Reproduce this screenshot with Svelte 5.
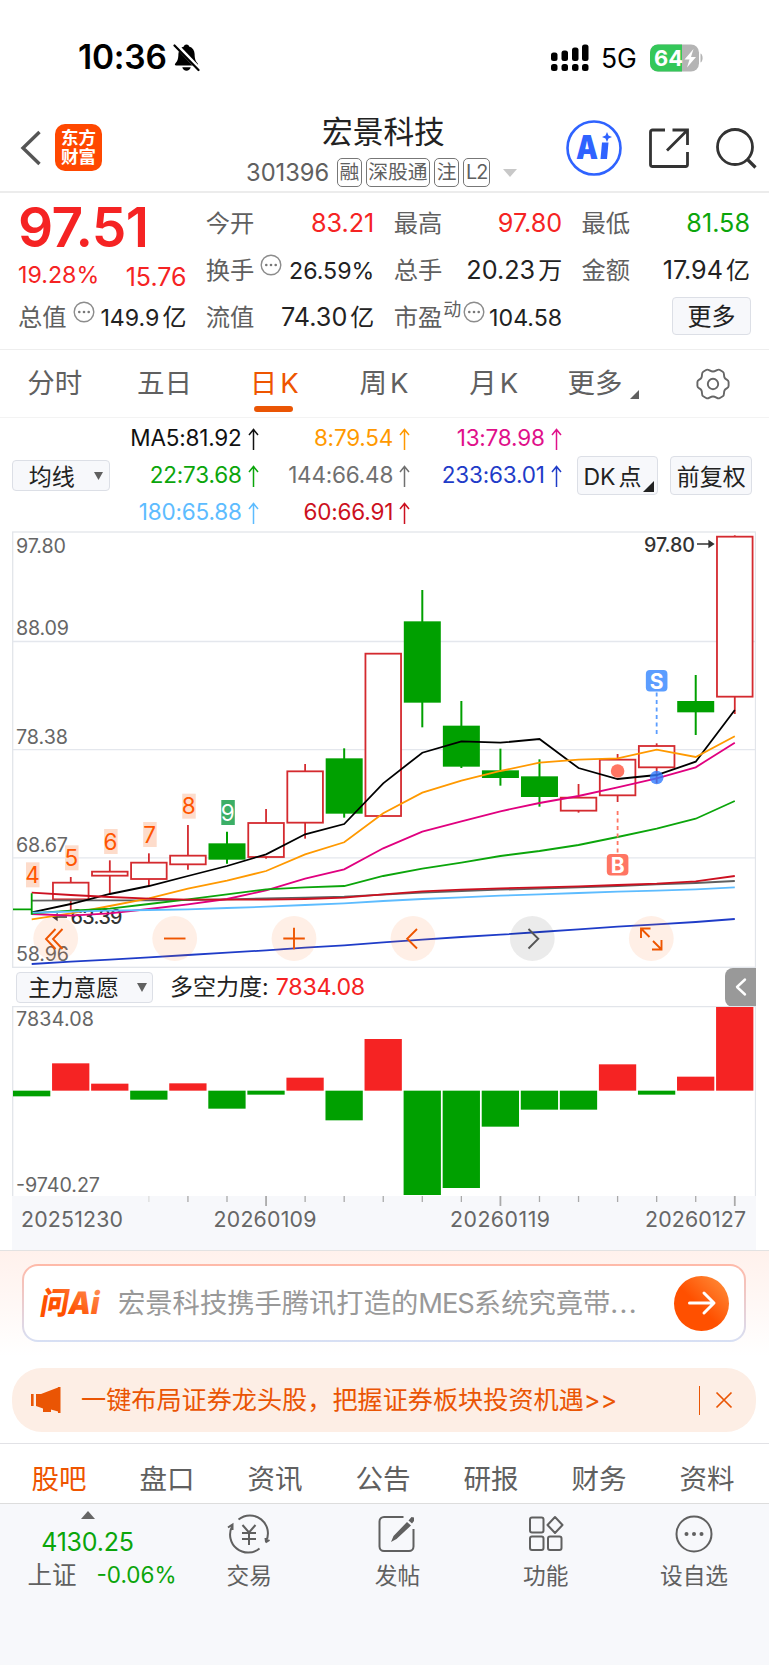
<script lang="ts">
  interface Candle {
    up: boolean
    high: number
    top: number
    bottom: number
    low: number
  }

  // chart samples are kept in @3x device pixels
  const STEP = 39.06
  const cx = (i: number) => 19.7 + STEP * i
  const py = (v: number) => v / 3 - 11
  const vy = (v: number) => v / 3 - 46

  const c = (up: number, high: number, top: number, bottom: number, low: number): Candle =>
    ({ up: up === 1, high, top, bottom, low })

  const candles: Candle[] = [
    c(0, 1120, 1167, 1169, 1184),
    c(1, 1071, 1088, 1138, 1170),
    c(1, 1021, 1055, 1067, 1120),
    c(1, 1000, 1028, 1077, 1097),
    c(1, 915, 1007, 1033, 1049),
    c(0, 935, 970, 1019, 1031),
    c(1, 867, 909, 1011, 1016),
    c(1, 732, 754, 908, 956),
    c(0, 685, 715, 881, 893),
    c(1, 401, 401, 888, 888),
    c(0, 210, 304, 548, 622),
    c(0, 543, 617, 740, 744),
    c(0, 686, 751, 774, 797),
    c(0, 718, 769, 831, 860),
    c(1, 792, 833, 872, 878),
    c(1, 702, 719, 826, 846),
    c(1, 670, 678, 742, 790),
    c(0, 465, 543, 577, 645),
    c(1, 46, 50, 530, 582),
  ]

  const lines = [
    { color: '#1f3cc8', pts: [1332, 1325, 1319, 1312, 1305, 1298, 1291, 1283, 1276, 1267, 1259, 1251, 1244, 1236, 1228, 1220, 1213, 1206, 1197] },
    { color: '#606060', pts: [1142, 1141, 1141, 1141, 1140, 1138, 1135, 1133, 1130, 1124, 1118, 1113, 1109, 1106, 1102, 1098, 1093, 1089, 1083] },
    { color: '#000000', pts: [1177, 1152, 1122, 1098, 1068, 1038, 1003, 943, 912, 790, 698, 664, 668, 657, 744, 777, 765, 725, 570] },
    { color: '#ff9900', pts: [1198, 1180, 1158, 1135, 1106, 1082, 1053, 1003, 967, 880, 818, 782, 753, 728, 719, 715, 689, 711, 649] },
    { color: '#e0007f', pts: [1182, 1187, 1180, 1167, 1153, 1137, 1111, 1076, 1048, 985, 935, 904, 874, 849, 828, 802, 775, 742, 668] },
    { color: '#0ba50b', pts: [1180, 1172, 1166, 1152, 1138, 1123, 1108, 1102, 1098, 1068, 1046, 1028, 1008, 993, 975, 951, 926, 896, 843] },
    { color: '#5dbcff', pts: [1178, 1175, 1172, 1170, 1168, 1164, 1160, 1155, 1150, 1143, 1137, 1132, 1127, 1123, 1119, 1115, 1112, 1108, 1102] },
    { color: '#cc1020', pts: [1118, 1125, 1131, 1136, 1139, 1139, 1139, 1137, 1133, 1123, 1114, 1109, 1105, 1102, 1099, 1095, 1091, 1084, 1068] },
  ]

  const counts = [
    { n: 4, y: 1027 }, { n: 5, y: 976 }, { n: 6, y: 927 },
    { n: 7, y: 906 }, { n: 8, y: 821 }, { n: 9, y: 840 },
  ]

  const ZERO = 392
  const force = [409, 310, 371, 419, 370, 446, 404, 353, 481, 237, 705, 684, 500, 449, 449, 313, 404, 350, 141]

  const path = (pts: number[]) => pts.map((p, i) => `${cx(i).toFixed(1)},${py(p).toFixed(1)}`).join(' ')

  const priceLabels = [
    { t: '97.80', y: 22, w: 50 },
    { t: '88.09', y: 104, w: 53 },
    { t: '78.38', y: 212.5, w: 52 },
    { t: '68.67', y: 321, w: 52 },
    { t: '58.96', y: 430, w: 53 },
  ]

  const dates = [
    { t: '20251230', x: 9, w: 102 },
    { t: '20260109', x: 201.5, w: 103 },
    { t: '20260119', x: 438, w: 100 },
    { t: '20260127', x: 633, w: 101 },
  ]

  const averages = [
    { t: 'MA5:81.92', color: '#111' },
    { t: '8:79.54', color: '#ff9900' },
    { t: '13:78.98', color: '#e0108a' },
    { t: '22:73.68', color: '#0ba50b' },
    { t: '144:66.48', color: '#707070' },
    { t: '233:63.01', color: '#1f3cc8' },
    { t: '180:65.88', color: '#5dbcff' },
    { t: '60:66.91', color: '#cc1020' },
  ]

  const sections = ['股吧', '盘口', '资讯', '公告', '研报', '财务', '资料']
</script>

{#snippet info()}
  <svg class="info" width="22" height="22" viewBox="0 0 22 22">
    <circle cx="11" cy="11" r="9.8" fill="none" stroke="#8c8c8c" stroke-width="1.4" />
    <g fill="#777"><circle cx="6.3" cy="11" r="1.3" /><circle cx="11" cy="11" r="1.3" /><circle cx="15.7" cy="11" r="1.3" /></g>
  </svg>
{/snippet}

<div class="page">
  <div class="status">
    <span class="time">10:36</span>
    <svg class="bell" width="27" height="29" viewBox="0 0 27 29">
      <path d="M13.5 1.5c1.5 0 2.4.9 2.6 2 3.5 1 5.4 4 5.5 7.6.1 5 .9 7.3 3.1 9.4.8.9.5 2-.8 2H3.1c-1.3 0-1.6-1.1-.8-2 2.2-2.1 3-4.4 3.1-9.4.1-3.6 2-6.6 5.5-7.6.2-1.1 1.1-2 2.6-2z" />
      <path d="M9.3 24.3h8.4c-.5 2-2.2 3.4-4.2 3.4s-3.7-1.4-4.2-3.4z" />
      <path d="M2.5 1.5l24 25" stroke="#fff" stroke-width="4.5" />
      <path d="M1.5 2.5l24 24.5" stroke="#000" stroke-width="2.2" stroke-linecap="round" />
    </svg>
    <svg class="signal" width="40" height="28" viewBox="0 0 40 28">
      <rect x="1" y="8.5" width="6.5" height="8.5" rx="2.5" />
      <rect x="11.5" y="6.5" width="6.5" height="10.5" rx="2.5" />
      <rect x="22" y="3.5" width="6.5" height="13.5" rx="2.5" />
      <rect x="32" y="0.5" width="6.5" height="16.5" rx="2.5" />
      <rect x="1" y="20" width="6.5" height="7" rx="2.5" />
      <rect x="11.5" y="20" width="6.5" height="7" rx="2.5" />
      <rect x="22" y="20" width="6.5" height="7" rx="2.5" />
      <rect x="32" y="20" width="6.5" height="7" rx="2.5" />
    </svg>
    <span class="net">5G</span>
    <svg class="battery" width="54" height="28" viewBox="0 0 54 28">
      <rect x="0" y="0.5" width="49" height="27" rx="8" fill="#b4b4b4" />
      <path d="M8 .5h24v27H8a8 8 0 0 1-8-8v-11a8 8 0 0 1 8-8z" fill="#34c759" />
      <path d="M50.5 9.5c2.8.9 2.8 8.1 0 9z" fill="#b4b4b4" />
      <text x="4" y="22" textLength="29" lengthAdjust="spacingAndGlyphs">64</text>
      <path d="M43.5 5l-9 10.500h5l-2.500 8 9-10.500H41z" fill="#fff" />
    </svg>
  </div>

  <header>
    <div class="left">
      <svg width="22" height="36" viewBox="0 0 22 36"><path d="M20.5 2L4 18l16.5 16" fill="none" stroke="#555" stroke-width="3.4" /></svg>
      <div class="logo"><span>东方</span><span>财富</span></div>
    </div>
    <div class="title">
      <h1>宏景科技</h1>
      <div class="sub">
        <span class="code">301396</span>
        <span class="tag">融</span><span class="tag">深股通</span><span class="tag">注</span><span class="tag l2">L2</span>
        <svg width="14" height="8" viewBox="0 0 14 8"><path d="M0 0h14L7 8z" fill="#c8c8c8" /></svg>
      </div>
    </div>
    <div class="tools">
      <svg width="58" height="58" viewBox="0 0 58 58">
        <circle cx="29" cy="29" r="26.5" fill="#fff" stroke="#2f63ff" stroke-width="2.6" />
        <text x="11" y="39.5" class="ai" textLength="22" lengthAdjust="spacingAndGlyphs">A</text>
        <path d="M37 23.5h6.5L42 40h-6.500z" fill="#2f63ff" />
        <path d="M42 13l1.500 3.500L47 18l-3.500 1.500L42 23l-1.500-3.500L37 18l3.500-1.500z" fill="#2f63ff" />
      </svg>
      <svg width="42" height="42" viewBox="0 0 42 42" fill="none" stroke="#333" stroke-width="2.800">
        <path d="M17 3H4.500a2 2 0 0 0-2 2v32.500a2 2 0 0 0 2 2h33a2 2 0 0 0 2-2V25" />
        <path d="M24.500 3h15v15M39 3.500L19 23.500" />
      </svg>
      <svg width="42" height="42" viewBox="0 0 42 42" fill="none" stroke="#333" stroke-width="2.800">
        <circle cx="20" cy="20" r="17.500" /><path d="M32 32l8.500 8.500" stroke-width="3.200" />
      </svg>
    </div>
  </header>

  <section class="quote">
    <div class="col">
      <div class="price">97.51</div>
      <div class="cell change"><span class="pct">19.28%</span><b>15.76</b></div>
      <div class="cell"><span>总值{@render info()}</span><b class="low">149.9<i>亿</i></b></div>
    </div>
    <div class="col">
      <div class="cell"><span>今开</span><b class="red">83.21</b></div>
      <div class="cell"><span>换手{@render info()}</span><b class="low">26.59%</b></div>
      <div class="cell"><span>流值</span><b>74.30<i>亿</i></b></div>
    </div>
    <div class="col">
      <div class="cell"><span>最高</span><b class="red">97.80</b></div>
      <div class="cell"><span>总手</span><b>20.23<i>万</i></b></div>
      <div class="cell"><span>市盈<sup>动</sup>{@render info()}</span><b class="low">104.58</b></div>
    </div>
    <div class="col">
      <div class="cell"><span>最低</span><b class="green">81.58</b></div>
      <div class="cell"><span>金额</span><b>17.94<i>亿</i></b></div>
      <div class="cell"><button class="box more">更多</button></div>
    </div>
  </section>

  <nav class="periods">
    <span>分时</span>
    <span>五日</span>
    <span class="active">日<em>K</em></span>
    <span>周<em>K</em></span>
    <span>月<em>K</em></span>
    <span class="drop">更多<svg width="9" height="9" viewBox="0 0 9 9"><path d="M9 0v9H0z" fill="#606060" /></svg></span>
    <span>
      <svg width="34" height="34" viewBox="0 0 34 34" fill="none" stroke="#666" stroke-width="1.9" stroke-linejoin="round">
        <path d="M10.500 2.800C12.500 1.800 14 4.500 17 4.500s4.500-2.700 6.500-1.700l3.300 1.900c2 1.300.6 3.800 1.800 6s4 1.900 4 4.300v4c0 2.400-2.800 2.100-4 4.300s.2 4.700-1.800 6l-3.300 1.900c-2 1-3.500-1.700-6.500-1.700s-4.500 2.700-6.500 1.700l-3.300-1.900c-2-1.300-.6-3.800-1.800-6s-4-1.900-4-4.300v-4c0-2.400 2.800-2.100 4-4.300s-.2-4.700 1.800-6z" />
        <circle cx="17" cy="17" r="5.2" />
      </svg>
    </span>
  </nav>

  <section class="ma">
    <button class="box ma-type"><span>均线</span><svg width="9" height="8" viewBox="0 0 9 8"><path d="M0 0h9L4.500 8z" fill="#606060" /></svg></button>
    <div class="averages">
      {#each averages as a}
        <span style="color: {a.color}">
          {a.t}<svg width="11" height="22" viewBox="0 0 11 22"><path d="M5.500 22V1.500M1 7l4.500-5.500L10 7" fill="none" stroke="currentColor" stroke-width="1.500" /></svg>
        </span>
      {/each}
    </div>
    <button class="box dk"><span>DK<i>点</i></span><svg width="11" height="11" viewBox="0 0 11 11"><path d="M11 0v11H0z" fill="#222" /></svg></button>
    <button class="box fq"><span>前复权</span></button>
  </section>

  <svg class="kline" width="744" height="437" viewBox="0 0 744 437">
    <rect x="0.7" y="1" width="742.8" height="435.3" fill="none" stroke="#e2e5ea" stroke-width="1.3" />
    {#each [110.5, 218.7, 326.8] as y}
      <path d="M1 {y}h742" stroke="#e4e7ed" stroke-width="1.3" />
    {/each}
    {#each priceLabels as l}
      <text class="axis" x="4" y={l.y} textLength={l.w}>{l.t}</text>
    {/each}

    <text class="mark" x="58.5" y="392.5" textLength="52">63.39</text>
    <path d="M41 386h14M41 386l4-3v6z" fill="#333" stroke="#333" stroke-width="1.3" />

    {#each candles as k, i}
      {#if k.up}
        <g fill="#fff" stroke="#d42a2f" stroke-width="1.8">
          <path d="M{cx(i)} {py(k.high)}V{py(k.low)}" />
          <rect x={cx(i) - 17.8} y={py(k.top)} width="35.6" height={(k.bottom - k.top) / 3} />
        </g>
      {:else if i > 0}
        <path d="M{cx(i)} {py(k.high)}V{py(k.low)}" stroke="#00a000" stroke-width="2" />
        <rect x={cx(i) - 18.5} y={py(k.top)} width="37" height={(k.bottom - k.top) / 3} fill="#00a000" />
      {/if}
    {/each}

    {#each lines as line}
      <polyline points={path(line.pts)} fill="none" stroke={line.color} stroke-width="1.8" />
    {/each}
    <path d="M{cx(0)} {py(1120)}V{py(1184)}M1 {py(1168)}H{cx(0)}" stroke="#00a000" stroke-width="1.8" />

    {#each counts as k, i}
      <rect x={cx(i) - 5.7} y={py(k.y)} width="13.5" height="25" fill={k.n === 9 ? '#3bae66' : '#fddccb'} />
      <text class="count" x={cx(i) + 0.7} y={py(k.y) + 20.5} fill={k.n === 9 ? '#fff' : '#ff5500'}>{k.n}</text>
    {/each}

    <text class="mark" x="632" y="20.5" textLength="51">97.80</text>
    <path d="M685 13h16M701.5 13l-4.5-3v6z" fill="#333" stroke="#333" stroke-width="1.3" />

    <path d="M{cx(16)} 161.5v43" stroke="#5b9dff" stroke-width="1.8" stroke-dasharray="4 3.5" />
    <rect x={cx(16) - 10.8} y="139" width="21.6" height="21.6" rx="4" fill="#5b9dff" />
    <text class="bs" x={cx(16)} y="157.5">S</text>
    <circle cx={cx(16)} cy="246.5" r="6.8" fill="#2f7bff" opacity="0.8" />

    <path d="M{cx(15)} 280v43" stroke="#ff7563" stroke-width="1.8" stroke-dasharray="4 3.5" />
    <rect x={cx(15) - 10.8} y="323" width="21.6" height="21.6" rx="4" fill="#ff7563" />
    <text class="bs" x={cx(15)} y="341.5">B</text>
    <circle cx={cx(15)} cy="240" r="6.8" fill="#ff7563" />

    <g fill="#ff6a1f" fill-opacity="0.11">
      <circle cx="43.7" cy="407.5" r="22.4" />
      <circle cx="162.7" cy="407.5" r="22.4" />
      <circle cx="282" cy="407.5" r="22.4" />
      <circle cx="401" cy="407.5" r="22.4" />
      <circle cx="520.3" cy="407.5" r="22.4" fill="#000" fill-opacity="0.08" />
      <circle cx="639.3" cy="407.5" r="22.4" />
    </g>
    <g fill="none" stroke="#ee5500" stroke-width="1.9">
      <path d="M43.5 398l-9.500 10 9.500 10M50.500 398l-9.500 10 9.500 10" />
      <path d="M152 407.500h21.500" />
      <path d="M271.300 407.500h21.500M282 396.800v21.500" />
      <path d="M405 398l-9.800 9.800L405 417.500" />
      <path d="M516.500 398l9.800 9.800-9.800 9.700" stroke="#555" />
      <path d="M629 407v-9.500h9.500M629.500 398l8 8M649.500 409v9.500H640M649 418l-8-8" />
    </g>
  </svg>

  <div class="indicator">
    <button class="box ind-type"><span>主力意愿</span><svg width="10" height="9" viewBox="0 0 9 8"><path d="M0 0h9L4.500 8z" fill="#606060" /></svg></button>
    <span class="name">多空力度:</span>
    <span class="val">7834.08</span>
    <div class="fold"><svg width="12" height="20" viewBox="0 0 12 20"><path d="M10 2.500L2 10l8 7.500" fill="none" stroke="#fff" stroke-width="2.400" stroke-linecap="round" stroke-linejoin="round" /></svg></div>
  </div>

  <svg class="force" width="744" height="244" viewBox="0 0 744 244">
    <rect x="0" y="190" width="744" height="54" fill="#f7f8fb" />
    <path d="M0.700 190V0.500h742.800V190" fill="none" stroke="#e2e5ea" stroke-width="1.300" />
    {#each force as v, i}
      <rect
        x={cx(i) - 18.7}
        y={vy(Math.min(v, ZERO))}
        width="37.3"
        height={Math.abs(v - ZERO) / 3}
        fill={v < ZERO ? '#f52323' : '#00a000'}
      />
    {/each}
    {#each force as _, i}
      {#if i >= 3}
        <path d="M{cx(i)} 190v{i % 6 === 0 ? 10 : 6}" stroke={i === 3 ? '#ddd' : '#aaa'} stroke-width={i % 6 === 0 ? 1.8 : 1.3} />
      {/if}
    {/each}
    <text class="axis" x="4" y="19.5" textLength="78">7834.08</text>
    <text class="axis" x="4" y="185.5" textLength="84">-9740.27</text>
    {#each dates as d}
      <text class="date" x={d.x} y="220.5" textLength={d.w}>{d.t}</text>
    {/each}
  </svg>

  <section class="ask">
    <div class="ask-box">
      <svg width="72" height="36" viewBox="0 0 72 36">
        <defs>
          <linearGradient id="ask-fill" x1="0" y1="1" x2="1" y2="0">
            <stop offset="0.4" stop-color="#ff5000" /><stop offset="1" stop-color="#ff9a66" />
          </linearGradient>
        </defs>
        <text class="ask-logo" transform="skewX(-10)" x="7" y="29" textLength="59" lengthAdjust="spacingAndGlyphs" fill="url(#ask-fill)">问Ai</text>
      </svg>
      <span class="question">宏景科技携手腾讯打造的<u>MES</u>系统究竟带<em>...</em></span>
      <span class="go"><svg width="32" height="28" viewBox="0 0 32 28"><path d="M3.500 14h24M18 4l10 10-10 10" fill="none" stroke="#fff" stroke-width="3" stroke-linecap="round" stroke-linejoin="round" /></svg></span>
    </div>
  </section>

  <div class="promo">
    <svg width="30" height="28" viewBox="0 0 30 28" fill="#ea5504">
      <rect x="0" y="8" width="2.6" height="12" /><path d="M5 8h5L27 1.500V1h2.500v26H27v-1.500l-7-2v2.500h-8v-3.500L5 20z" />
    </svg>
    <span class="promo-text">一键布局证券龙头股，把握证券板块投资机遇&gt;&gt;</span>
    <span class="bar"></span>
    <svg width="18" height="18" viewBox="0 0 18 18"><path d="M1.500 1.500l15 15M16.500 1.500l-15 15" stroke="#ea5504" stroke-width="1.700" /></svg>
  </div>

  <nav class="sections">
    {#each sections as s, i}
      <span class:active={i === 0}>{s}</span>
    {/each}
  </nav>

  <footer>
    <div class="index">
      <svg width="14" height="8" viewBox="0 0 14 8"><path d="M7 0l7 8H0z" fill="#666" /></svg>
      <div class="index-val">4130.25</div>
      <div class="index-row"><span>上证</span><b>-0.06%</b></div>
    </div>
    <div class="item">
      <svg width="44" height="40" viewBox="0 0 44 40" fill="none" stroke="#606060" stroke-width="2">
        <path d="M11.500 5.500A18 18 0 0 1 39 27.500M39 28l-.5-4M38.500 28.500l4-2.500M32.500 34.500A18 18 0 0 1 5 12.500M5.500 16v-5.500l-4.500 3" />
        <path d="M15.500 11l6.500 7.500L28.500 11M15 19h14M15 25h14M22 18.500V31" />
      </svg>
      <span>交易</span>
    </div>
    <div class="item">
      <svg width="44" height="40" viewBox="0 0 44 40" fill="none" stroke="#606060" stroke-width="2">
        <path d="M28.500 3H9a4.500 4.500 0 0 0-4.500 4.500v25A4.500 4.500 0 0 0 9 37h25a4.500 4.500 0 0 0 4.500-4.500V15" />
        <path d="M32 8l4 3.500-14.500 13.500-5.500 3 2.500-6zM33.500 6.500l3-3.500 2.500.5v3.500l-2 2.500z" fill="#606060" stroke="none" />
      </svg>
      <span>发帖</span>
    </div>
    <div class="item">
      <svg width="44" height="40" viewBox="0 0 44 40" fill="none" stroke="#606060" stroke-width="2" stroke-linejoin="round">
        <rect x="6" y="3.500" width="13.500" height="15" rx="2" />
        <rect x="6" y="22.500" width="13.500" height="13.500" rx="2" />
        <rect x="24" y="22.500" width="13.500" height="13.500" rx="2" />
        <path d="M31 3l7.500 8-7.500 8-7.500-8z" />
      </svg>
      <span>功能</span>
    </div>
    <div class="item">
      <svg width="44" height="40" viewBox="0 0 44 40">
        <circle cx="22" cy="20" r="17.5" fill="none" stroke="#606060" stroke-width="2" />
        <g fill="#606060"><circle cx="14.5" cy="20" r="2" /><circle cx="22" cy="20" r="2" /><circle cx="29.5" cy="20" r="2" /></g>
      </svg>
      <span>设自选</span>
    </div>
  </footer>
</div>

<style>
  :global(body) {
    margin: 0;
    background: #fff;
  }

  .page {
    width: 769px;
    height: 1665px;
    overflow: hidden;
    display: flex;
    flex-direction: column;
    font-family: Inter, 'Noto Sans CJK SC', sans-serif;
    color: #222;
    line-height: 1;
    white-space: nowrap;
  }

  .page > * {
    flex-shrink: 0;
    box-sizing: border-box;
  }

  svg {
    display: block;
    flex-shrink: 0;
  }

  i, em, u {
    font-style: normal;
    text-decoration: none;
  }

  .status {
    height: 110px;
    padding: 5px 0 0 78px;
    display: flex;
    align-items: center;
    color: #000;
  }

  .time {
    width: 95px;
    font-size: 33.5px;
    font-weight: 600;
    letter-spacing: -0.2px;
  }

  .signal {
    margin-left: 350px;
  }

  .net {
    width: 49px;
    margin-left: 11px;
    padding-top: 2px;
    font-size: 26.5px;
    font-weight: 400;
    letter-spacing: -0.2px;
  }

  .battery text {
    font-size: 22px;
    font-weight: 700;
    fill: #fff;
  }

  header {
    height: 83px;
    border-bottom: 2px solid #ececec;
    display: grid;
    grid-template-columns: 246px 319px 1fr;
  }

  .left {
    display: flex;
    align-items: center;
    gap: 14px;
    padding: 0 0 6px 19px;
  }

  .logo {
    width: 47px;
    height: 47px;
    border-radius: 10px;
    background: #ff4800;
    color: #fff;
    display: flex;
    flex-direction: column;
    align-items: center;
    justify-content: center;
    gap: 1px;
    font-size: 17.5px;
    font-weight: 700;
    line-height: 18px;
  }

  h1 {
    margin: 6px 0 0;
    padding-left: 76px;
    font-size: 30.7px;
    line-height: 32px;
    font-weight: 400;
  }

  .sub {
    display: flex;
    align-items: center;
    gap: 4px;
    margin-top: 10px;
    height: 29px;
    color: #606060;
  }

  .code {
    width: 87px;
    padding-top: 1px;
    font-size: 23.7px;
  }

  .sub svg {
    margin-left: 9px;
  }

  .tag {
    height: 29px;
    box-sizing: border-box;
    padding: 0 1.5px;
    border: 1.4px solid #777;
    border-radius: 5px;
    font-size: 19.8px;
    line-height: 26px;
  }

  .l2 {
    padding: 0 2px;
    letter-spacing: -1px;
  }

  .tools {
    display: flex;
    align-items: center;
    gap: 25px;
    padding-bottom: 6px;
  }

  .ai {
    font-size: 33px;
    font-weight: 900;
    fill: #2f63ff;
  }

  .quote {
    height: 157px;
    border-bottom: 1px solid #eee;
    padding: 7px 19px 0 18px;
    display: grid;
    grid-template-columns: repeat(4, 168.5px);
    justify-content: space-between;
  }

  .cell {
    height: 47px;
    display: flex;
    align-items: center;
    justify-content: space-between;
    font-size: 24.3px;
  }

  .cell span {
    display: flex;
    color: #606060;
  }

  .cell b {
    font-weight: 400;
    font-size: 25.2px;
    color: #222;
  }

  .cell b i {
    margin-left: 3px;
    font-size: 24px;
  }

  .cell .low {
    padding-top: 2px;
    font-size: 23.2px;
  }

  .cell .red {
    color: #f52323;
  }

  .cell .green {
    color: #0ba50b;
  }

  .info {
    margin: -4px 0 0 6px;
  }

  sup {
    font-size: 18px;
    line-height: 18px;
    margin-left: 1px;
    margin-top: -4px;
  }

  sup + .info {
    margin-left: 2px;
  }

  .price {
    height: 55px;
    font-size: 55px;
    font-weight: 600;
    line-height: 54px;
    letter-spacing: -0.7px;
    color: #f52323;
  }

  .change {
    height: 41px;
    margin-bottom: -2px;
  }

  .change b,
  .change .pct {
    color: #f52323;
  }

  .change .pct {
    padding-top: 1px;
    font-size: 23.2px;
  }

  .change b {
    padding-top: 4px;
    font-size: 25px;
  }

  .box {
    box-sizing: border-box;
    padding: 0;
    border: 1.4px solid #dcdfe6;
    border-radius: 4px;
    background: #f7f8fb;
    font-family: inherit;
    color: #222;
    display: flex;
    align-items: center;
    justify-content: center;
  }

  .box span {
    margin-top: -2px;
  }

  .more {
    width: 79px;
    height: 38px;
    margin: -3px -1px 0 auto;
    padding-bottom: 3px;
    font-size: 24px;
  }

  .periods {
    height: 68px;
    border-bottom: 1px solid #f3f3f3;
    padding-right: 1px;
    display: grid;
    grid-template-columns: repeat(7, 1fr);
  }

  .periods span {
    display: flex;
    align-items: center;
    justify-content: center;
    font-size: 27.5px;
    color: #606060;
    padding-top: 1px;
    position: relative;
  }

  .periods em {
    margin-left: 3px;
  }

  .periods .active {
    color: #ee5500;
  }

  .periods .active::after {
    content: '';
    position: absolute;
    left: 35px;
    bottom: 5px;
    width: 39px;
    height: 6px;
    border-radius: 3px;
    background: #ea5504;
  }

  .drop svg {
    margin: 20px 0 0 8px;
  }

  .ma {
    height: 113px;
    padding: 2px 17px 0 12px;
    display: flex;
    align-items: center;
  }

  .ma-type {
    width: 98px;
    height: 31px;
    font-size: 23px;
    gap: 19px;
    padding-left: 10px;
  }

  .averages {
    display: grid;
    grid-template-columns: 149px 151.5px 151.5px;
    grid-auto-rows: 37px;
  }

  .averages span {
    display: flex;
    align-items: center;
    justify-content: flex-end;
    gap: 6px;
    font-size: 22.5px;
    letter-spacing: -0.2px;
  }

  .dk {
    width: 82px;
    height: 39px;
    margin-left: 15px;
    font-size: 23px;
  }

  .dk i {
    margin-left: 3px;
  }

  .dk svg {
    margin: 22px -2px 0 1px;
  }

  .fq {
    width: 82px;
    height: 39px;
    margin-left: 12px;
    font-size: 23px;
  }

  .kline,
  .force {
    margin-left: 12px;
  }

  .axis {
    font-size: 19.7px;
    fill: #666;
  }

  .date {
    font-size: 21.3px;
    fill: #666;
  }

  .mark {
    font-size: 19.7px;
    font-weight: 500;
    fill: #333;
  }

  .count {
    font-size: 22.5px;
    text-anchor: middle;
  }

  .bs {
    font-size: 21px;
    font-weight: 700;
    fill: #fff;
    text-anchor: middle;
  }

  .indicator {
    height: 38px;
    padding: 0 13px 0 16px;
    display: flex;
    align-items: center;
  }

  .ind-type {
    width: 137px;
    height: 31px;
    gap: 18px;
    padding-left: 6px;
    font-size: 22.7px;
  }

  .name {
    margin-left: 17px;
    font-size: 23px;
  }

  .val {
    margin-left: 7px;
    padding-top: 1px;
    font-size: 23.2px;
    letter-spacing: -0.2px;
    color: #f52323;
  }

  .fold {
    width: 31px;
    height: 39px;
    margin-left: auto;
    border-radius: 8px 0 0 8px;
    background: #999;
    display: flex;
    align-items: center;
    justify-content: center;
  }

  .ask {
    height: 118px;
    border-top: 1px solid #e2e2e2;
    padding: 13px 23px 0 22px;
    background: linear-gradient(#fff1ec, #fff 90%);
  }

  .ask-box {
    height: 78px;
    box-sizing: border-box;
    border: 2px solid transparent;
    border-radius: 16px;
    background: linear-gradient(#fff, #fff) padding-box, linear-gradient(#ffb9a8, #d7dff4) border-box;
    display: flex;
    align-items: center;
    padding: 0 15px 0 13px;
  }

  .ask-logo {
    font-size: 31px;
    font-weight: 900;
  }

  .question {
    margin: 1px 0 0 9px;
    font-size: 27.3px;
    color: #999;
  }

  .question u {
    letter-spacing: -1px;
  }

  .question em {
    letter-spacing: 1.3px;
  }

  .go {
    width: 55px;
    height: 55px;
    margin-left: auto;
    border-radius: 50%;
    background: linear-gradient(45deg, #ff5000 45%, #ff9440);
    display: flex;
    align-items: center;
    justify-content: center;
  }

  .promo {
    width: 744px;
    height: 64px;
    margin-left: 12px;
    padding: 0 23px 0 19px;
    border-radius: 30px;
    background: #fdeee5;
    color: #ea5504;
    display: flex;
    align-items: center;
  }

  .promo-text {
    margin: 1px 0 0 20px;
    font-size: 25.15px;
  }

  .bar {
    width: 1.5px;
    height: 29px;
    margin: 0 15px 0 auto;
    background: #ea5504;
  }

  .sections {
    height: 61px;
    margin-top: 11px;
    padding: 10px 8px 0 5px;
    border-top: 1px solid #e2e2e6;
    border-bottom: 1px solid #ddd;
    display: grid;
    grid-template-columns: repeat(7, 1fr);
    text-align: center;
    font-size: 27.5px;
    line-height: 51px;
    color: #606060;
  }

  .sections .active {
    color: #ee5500;
  }

  footer {
    flex: 1;
    background: #f7f8fb;
    display: grid;
    grid-template-columns: 175px repeat(4, 148.3px);
    color: #606060;
  }

  .index {
    padding: 7px 0 0;
    display: flex;
    flex-direction: column;
    align-items: center;
  }

  .index-val {
    margin-top: 10px;
    font-size: 25px;
    line-height: 26px;
    letter-spacing: -0.2px;
    color: #0ba50b;
  }

  .index-row {
    margin: 8px 0 0 29px;
    display: flex;
    align-items: center;
    gap: 20px;
    font-size: 24.5px;
    line-height: 24px;
  }

  .index-row b {
    font-size: 22.5px;
    font-weight: 400;
    color: #0ba50b;
  }

  .item {
    display: flex;
    flex-direction: column;
    align-items: center;
    padding-top: 10px;
    font-size: 22.7px;
    line-height: 24px;
  }

  .item span {
    margin-top: 10px;
  }
</style>
